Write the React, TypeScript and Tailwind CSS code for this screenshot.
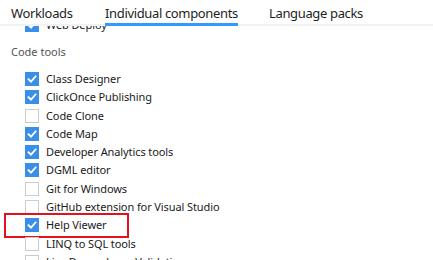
import React from "react";

const items: { label: string; checked: boolean; highlight?: boolean }[] = [
  { label: "Class Designer", checked: true },
  { label: "ClickOnce Publishing", checked: true },
  { label: "Code Clone", checked: false },
  { label: "Code Map", checked: true },
  { label: "Developer Analytics tools", checked: true },
  { label: "DGML editor", checked: true },
  { label: "Git for Windows", checked: false },
  { label: "GitHub extension for Visual Studio", checked: false },
  { label: "Help Viewer", checked: true, highlight: true },
  { label: "LINQ to SQL tools", checked: false },
  { label: "Live Dependency Validation", checked: false },
];

function Box({ checked }: { checked: boolean }) {
  if (checked) {
    return (
      <div className="w-[14px] h-[14px] bg-[#3b8ee8] flex items-center justify-center shrink-0">
        <svg width="10" height="10" viewBox="0 0 10 10">
          <polyline points="1.5,5.2 4,7.6 8.6,2.4" fill="none" stroke="white" strokeWidth="1.8" strokeLinecap="square" />
        </svg>
      </div>
    );
  }
  return <div className="w-[14px] h-[14px] border border-[#cccccc] bg-white shrink-0" />;
}

function Row({ label, checked, highlight }: { label: string; checked: boolean; highlight?: boolean }) {
  return (
    <div className="relative h-[18.3px] flex items-center pl-[25px]">
      <Box checked={checked} />
      <span className="ml-[7px] text-[11px] leading-[14px] text-[#1a1a1a] whitespace-nowrap tracking-[-0.1px]">{label}</span>
      {highlight && (
        <div className="absolute left-[4px] top-[-3px] w-[125px] h-[25px] border-2 border-[#e3101e]" />
      )}
    </div>
  );
}

export default function App() {
  return (
    <div
      className="w-[433px] h-[260px] overflow-hidden bg-white flex flex-col"
      style={{ fontFamily: '"Noto Sans", "Open Sans", sans-serif' }}
    >
      <div className="h-[26px] shrink-0 border-b-2 border-[#f2f2f2] flex items-start pl-[11px] relative z-10 bg-white">
        <div className="w-[94px] pt-[5px] text-[13px] leading-[16px] text-[#1e1e1e] whitespace-nowrap tracking-[-0.35px]">Workloads</div>
        <div className="w-[164px]">
          <div className="inline-block h-[26px] pt-[5px] text-[13px] leading-[16px] text-[#1e1e1e] whitespace-nowrap tracking-[-0.35px] border-b-[3px] border-[#3399ff]">
            Individual components
          </div>
        </div>
        <div className="pt-[5px] text-[13px] leading-[16px] text-[#1e1e1e] whitespace-nowrap tracking-[-0.35px]">Language packs</div>
      </div>
      <div className="flex-1 overflow-hidden">
        <div className="mt-[-10px]">
          <Row label="Web Deploy" checked={true} />
          <div className="h-[35.5px] flex items-center pl-[11px] text-[11px] text-[#555555]">Code tools</div>
          {items.map((it) => (
            <Row key={it.label} {...it} />
          ))}
        </div>
      </div>
    </div>
  );
}
